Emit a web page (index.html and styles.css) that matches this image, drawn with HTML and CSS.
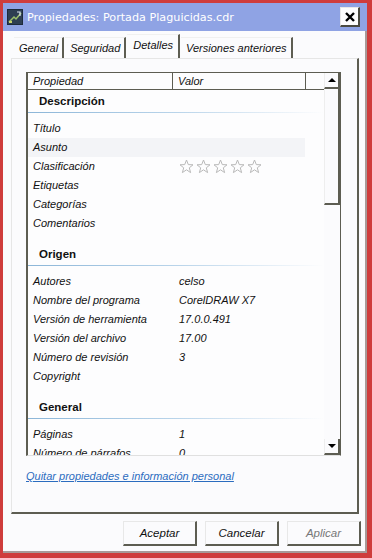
FILE: index.html
```html
<!DOCTYPE html>
<html lang="es">
<head>
    <meta charset="UTF-8">
    <meta name="viewport" content="width=device-width, initial-scale=1.0">
    <title>Propiedades: Portada Plaguicidas.cdr</title>
    <link rel="stylesheet" href="styles.css">
</head>
<body>
    <div class="window">
        <div class="titlebar">
            <svg class="app-icon" width="16" height="16" viewBox="0 0 16 16">
                <rect x="0" y="0" width="16" height="16" fill="#1d2a3a"/>
                <rect x="1" y="1" width="14" height="14" fill="#2e3f52"/>
                <path d="M2 13 L7 8 L9 10 L14 4" stroke="#9cc06a" stroke-width="1.5" fill="none"/>
                <path d="M10 3 L13 3 L13 7" stroke="#d8e2f0" stroke-width="1.2" fill="none"/>
                <rect x="2" y="12" width="3" height="2" fill="#c7d36b"/>
            </svg>
            <span class="title">Propiedades: Portada Plaguicidas.cdr</span>
            <button class="close" type="button">
                <svg width="12" height="12" viewBox="0 0 12 12">
                    <path d="M2 2 L10 10 M10 2 L2 10" stroke="#000" stroke-width="2.4"/>
                </svg>
            </button>
        </div>

        <div class="tabs">
            <div class="tab">General</div>
            <div class="tab">Seguridad</div>
            <div class="tab active">Detalles</div>
            <div class="tab">Versiones anteriores</div>
        </div>

        <div class="panel">
            <div class="list">
                <div class="list-main">
                    <div class="list-head">
                        <div class="col-prop">Propiedad</div>
                        <div class="col-val">Valor</div>
                        <div class="col-blank"></div>
                    </div>
                    <div class="list-body">
                        <div class="section">Descripción</div>
                        <div class="row"><span class="prop">Título</span><span class="val"></span></div>
                        <div class="row hover"><span class="prop">Asunto</span><span class="val"></span></div>
                        <div class="row"><span class="prop">Clasificación</span>
                            <span class="val stars">
                                <svg width="84" height="15" viewBox="0 0 84 15">
                                    <g fill="none" stroke="#b9b9b9" stroke-width="1">
                                        <path id="st" d="M7.5 1 L9.3 5.6 L14 5.8 L10.3 8.8 L11.6 13.6 L7.5 10.8 L3.4 13.6 L4.7 8.8 L1 5.8 L5.7 5.6 Z"/>
                                        <use href="#st" x="17"/>
                                        <use href="#st" x="34"/>
                                        <use href="#st" x="51"/>
                                        <use href="#st" x="68"/>
                                    </g>
                                </svg>
                            </span>
                        </div>
                        <div class="row"><span class="prop">Etiquetas</span><span class="val"></span></div>
                        <div class="row"><span class="prop">Categorías</span><span class="val"></span></div>
                        <div class="row"><span class="prop">Comentarios</span><span class="val"></span></div>

                        <div class="section spaced">Origen</div>
                        <div class="row"><span class="prop">Autores</span><span class="val">celso</span></div>
                        <div class="row"><span class="prop">Nombre del programa</span><span class="val">CorelDRAW X7</span></div>
                        <div class="row"><span class="prop">Versión de herramienta</span><span class="val">17.0.0.491</span></div>
                        <div class="row"><span class="prop">Versión del archivo</span><span class="val">17.00</span></div>
                        <div class="row"><span class="prop">Número de revisión</span><span class="val">3</span></div>
                        <div class="row"><span class="prop">Copyright</span><span class="val"></span></div>

                        <div class="section spaced">General</div>
                        <div class="row"><span class="prop">Páginas</span><span class="val">1</span></div>
                        <div class="row"><span class="prop">Número de párrafos</span><span class="val">0</span></div>
                    </div>
                </div>
                <div class="scrollbar">
                    <div class="sb-btn"><span class="arrow up"></span></div>
                    <div class="sb-track">
                        <div class="sb-thumb"></div>
                    </div>
                    <div class="sb-btn"><span class="arrow down"></span></div>
                </div>
            </div>

            <a class="link" href="#">Quitar propiedades e información personal</a>
        </div>

        <div class="buttons">
            <button type="button" class="btn">Aceptar</button>
            <button type="button" class="btn">Cancelar</button>
            <button type="button" class="btn disabled">Aplicar</button>
        </div>
    </div>
</body>
</html>
```

FILE: styles.css
```css
body {
    margin: 0;
    font-family: "Liberation Sans", Arial, sans-serif;
    font-size: 11px;
    font-style: italic;
    color: #111;
}

.window {
    width: 372px;
    height: 558px;
    box-sizing: border-box;
    border: 3px solid #cf3c3c;
    border-right-width: 5px;
    border-bottom-width: 5px;
    box-shadow: inset -2px -2px 0 #a89a98;
    background: #fbfbfd;
    display: flex;
    flex-direction: column;
}

/* title bar */
.titlebar {
    height: 28px;
    background: #8fa3e4;
    display: flex;
    align-items: center;
    padding: 0 5px 0 4px;
    font-style: normal;
}

.app-icon {
    margin-right: 4px;
}

.title {
    flex: 1;
    color: #fff;
    font-family: "DejaVu Sans", Verdana, sans-serif;
    font-size: 11.2px;
}

.close {
    width: 20px;
    height: 20px;
    padding: 0;
    background: #fdfdfd;
    border: 1px solid #e8e8e8;
    border-right: 2px solid #4a4a40;
    border-bottom: 2px solid #4a4a40;
    display: flex;
    align-items: center;
    justify-content: center;
    margin-right: 2px;
}

/* tabs */
.tabs {
    display: flex;
    align-items: flex-end;
    height: 27px;
    padding-left: 11px;
}

.tab {
    height: 20px;
    line-height: 20px;
    padding: 0 4px 0 5px;
    margin-right: 1px;
    border-top: 1px solid #f0f0f0;
    border-right: 2px solid #5d5d52;
    background: #fbfbfd;
}

.tab.active {
    height: 23px;
    line-height: 21px;
    padding: 0 5px 0 6px;
    background: #fbfbfd;
}

/* panel */
.panel {
    margin: 0 8px 0 8px;
    height: 456px;
    box-sizing: border-box;
    border-top: 1px solid #e6e6e6;
    border-left: 1px solid #e6e6e6;
    border-right: 2px solid #5d5d52;
    border-bottom: 2px solid #5d5d52;
    padding: 13px 15px 0 14px;
}

.list {
    display: flex;
    width: 315px;
    height: 384px;
    box-sizing: border-box;
    border-top: 1px solid #5d5d52;
    border-left: 2px solid #5d5d52;
    border-right: 1px solid #5d5d52;
    border-bottom: 1px solid #e0e0e0;
    background: #fdfdfe;
}

.list-main {
    flex: 1;
    overflow: hidden;
    display: flex;
    flex-direction: column;
}

.list-head {
    display: flex;
    height: 16px;
    flex-shrink: 0;
    border-bottom: 1px solid #5d5d52;
    line-height: 16px;
}

.col-prop {
    width: 139px;
    padding-left: 5px;
    border-right: 1px solid #5d5d52;
}

.col-val {
    width: 127px;
    padding-left: 5px;
    border-right: 1px solid #5d5d52;
}

.col-blank {
    flex: 1;
}

.list-body {
    flex: 1;
    overflow: hidden;
}

.section {
    height: 22px;
    line-height: 22px;
    padding-left: 11px;
    font-size: 11.5px;
    font-style: normal;
    font-weight: bold;
    position: relative;
    margin-bottom: 7px;
}

.section::after {
    content: "";
    position: absolute;
    left: 0;
    right: 0;
    bottom: -1px;
    height: 1px;
    background: linear-gradient(to right, #8cb6d8 0%, #b9d4ea 50%, #fdfdfe 100%);
}

.section.spaced {
    margin-top: 10px;
}

.row {
    display: flex;
    height: 19px;
    line-height: 19px;
}

.row.hover {
    background: #f3f4f7;
    margin-right: 19px;
}

.prop {
    width: 146px;
    padding-left: 5px;
    flex-shrink: 0;
}

.val {
    flex: 1;
}

.stars svg {
    display: block;
    margin-top: 2px;
}

/* scrollbar */
.scrollbar {
    width: 16px;
    display: flex;
    flex-direction: column;
}

.sb-btn {
    height: 16px;
    box-sizing: border-box;
    background: #fbfbfd;
    border-right: 2px solid #5d5d52;
    border-bottom: 2px solid #5d5d52;
    border-left: 1px solid #eeeeee;
    display: flex;
    align-items: center;
    justify-content: center;
}

.sb-track {
    flex: 1;
    background: #fbfbfd;
    padding-bottom: 1px;
}

.sb-thumb {
    height: 116px;
    box-sizing: border-box;
    border-right: 2px solid #5d5d52;
    border-bottom: 2px solid #5d5d52;
    border-left: 1px solid #eeeeee;
    background: #fbfbfd;
}

.arrow {
    width: 0;
    height: 0;
    border-left: 4px solid transparent;
    border-right: 4px solid transparent;
}

.arrow.up {
    border-bottom: 4px solid #000;
}

.arrow.down {
    border-top: 4px solid #000;
}

.link {
    display: block;
    margin-top: 14px;
    color: #2b6cbf;
    text-decoration: underline;
}

/* buttons */
.buttons {
    display: flex;
    justify-content: flex-end;
    gap: 8px;
    padding: 7px 6px 0 0;
}

.btn {
    width: 74px;
    height: 25px;
    font-family: "Liberation Sans", Arial, sans-serif;
    font-size: 11.5px;
    font-style: italic;
    color: #111;
    background: #fbfbfd;
    border: 1px solid #e8e8e8;
    border-right: 2px solid #5d5d52;
    border-bottom: 2px solid #5d5d52;
}

.btn.disabled {
    color: #777;
}
```
